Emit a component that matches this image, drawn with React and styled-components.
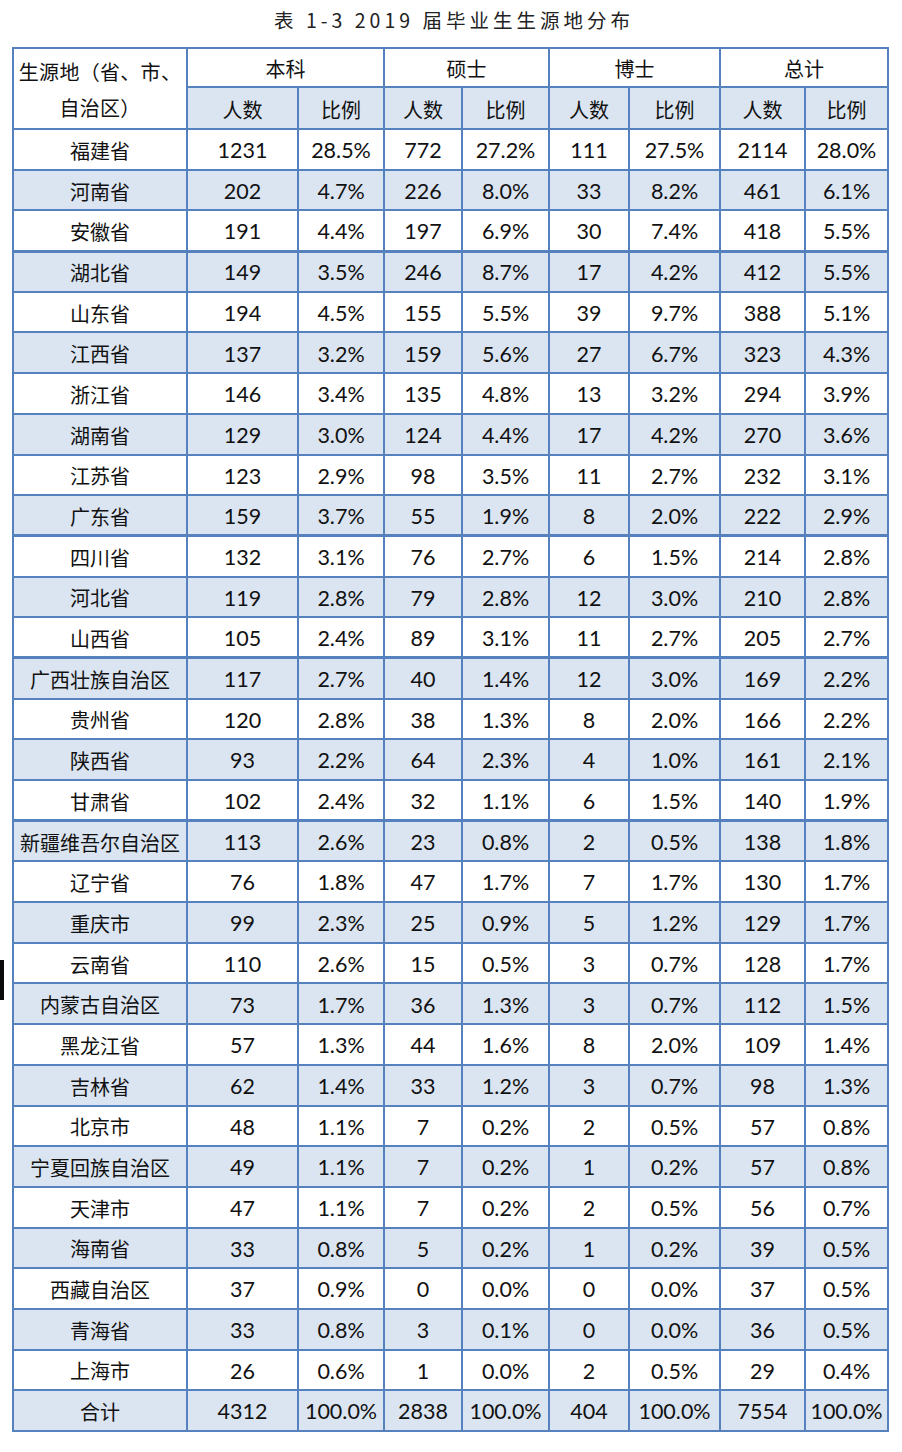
import React from "react";
import styled, { createGlobalStyle } from "styled-components";

const Global = createGlobalStyle`
  html, body { margin: 0; padding: 0; background: #fff; }
  body { font-family: "Lato", "Noto Sans CJK SC", sans-serif; color: #111; }
`;

const Page = styled.div`
  position: relative;
  width: 902px;
  height: 1452px;
  padding: 0 0 0 12px;
  box-sizing: border-box;
`;

const Title = styled.div`
  height: 47px;
  display: flex;
  justify-content: center;
  align-items: flex-start;
  padding: 5px 0 0 6px;
  box-sizing: border-box;
  font-family: "Noto Sans CJK SC", sans-serif;
  font-size: 19.5px;
  letter-spacing: 4px;
  color: #222;
  margin-left: -12px;
`;

const Table = styled.table`
  border-collapse: collapse;
  table-layout: fixed;
  width: 877px;
  color: #111;
`;

const Cell = styled.td`
  border: 2px solid #5581bf;
  text-align: center;
  vertical-align: middle;
  padding: 3px 0 0 0;
  white-space: nowrap;
  line-height: 1;
  background: ${(p) => (p.$shade ? "#dbe5f1" : "#fff")};
  font-family: ${(p) => (p.$cjk ? '"Noto Sans CJK SC", sans-serif' : '"Lato", "Noto Sans CJK SC", sans-serif')};
  font-size: ${(p) => (p.$cjk ? "20px" : "21.5px")};
  ${(p) => (p.$thick ? "border-top-width: 3px;" : "")}
`;

const CornerCell = styled(Cell)`
  white-space: normal;
  line-height: 36px;
  padding: 2px 0 0 0;
  letter-spacing: 0.3px;
`;

const HeadRow = styled.tr`
  height: ${(p) => p.$h}px;
`;

const Row = styled.tr`
  height: 40.7px;
`;

const Marker = styled.div`
  position: absolute;
  left: 0;
  top: 960px;
  width: 4px;
  height: 40px;
  background: #0a0a0a;
`;

const data = [
  ["福建省", 1231, "28.5%", 772, "27.2%", 111, "27.5%", 2114, "28.0%"],
  ["河南省", 202, "4.7%", 226, "8.0%", 33, "8.2%", 461, "6.1%"],
  ["安徽省", 191, "4.4%", 197, "6.9%", 30, "7.4%", 418, "5.5%"],
  ["湖北省", 149, "3.5%", 246, "8.7%", 17, "4.2%", 412, "5.5%"],
  ["山东省", 194, "4.5%", 155, "5.5%", 39, "9.7%", 388, "5.1%"],
  ["江西省", 137, "3.2%", 159, "5.6%", 27, "6.7%", 323, "4.3%"],
  ["浙江省", 146, "3.4%", 135, "4.8%", 13, "3.2%", 294, "3.9%"],
  ["湖南省", 129, "3.0%", 124, "4.4%", 17, "4.2%", 270, "3.6%"],
  ["江苏省", 123, "2.9%", 98, "3.5%", 11, "2.7%", 232, "3.1%"],
  ["广东省", 159, "3.7%", 55, "1.9%", 8, "2.0%", 222, "2.9%"],
  ["四川省", 132, "3.1%", 76, "2.7%", 6, "1.5%", 214, "2.8%"],
  ["河北省", 119, "2.8%", 79, "2.8%", 12, "3.0%", 210, "2.8%"],
  ["山西省", 105, "2.4%", 89, "3.1%", 11, "2.7%", 205, "2.7%"],
  ["广西壮族自治区", 117, "2.7%", 40, "1.4%", 12, "3.0%", 169, "2.2%"],
  ["贵州省", 120, "2.8%", 38, "1.3%", 8, "2.0%", 166, "2.2%"],
  ["陕西省", 93, "2.2%", 64, "2.3%", 4, "1.0%", 161, "2.1%"],
  ["甘肃省", 102, "2.4%", 32, "1.1%", 6, "1.5%", 140, "1.9%"],
  ["新疆维吾尔自治区", 113, "2.6%", 23, "0.8%", 2, "0.5%", 138, "1.8%"],
  ["辽宁省", 76, "1.8%", 47, "1.7%", 7, "1.7%", 130, "1.7%"],
  ["重庆市", 99, "2.3%", 25, "0.9%", 5, "1.2%", 129, "1.7%"],
  ["云南省", 110, "2.6%", 15, "0.5%", 3, "0.7%", 128, "1.7%"],
  ["内蒙古自治区", 73, "1.7%", 36, "1.3%", 3, "0.7%", 112, "1.5%"],
  ["黑龙江省", 57, "1.3%", 44, "1.6%", 8, "2.0%", 109, "1.4%"],
  ["吉林省", 62, "1.4%", 33, "1.2%", 3, "0.7%", 98, "1.3%"],
  ["北京市", 48, "1.1%", 7, "0.2%", 2, "0.5%", 57, "0.8%"],
  ["宁夏回族自治区", 49, "1.1%", 7, "0.2%", 1, "0.2%", 57, "0.8%"],
  ["天津市", 47, "1.1%", 7, "0.2%", 2, "0.5%", 56, "0.7%"],
  ["海南省", 33, "0.8%", 5, "0.2%", 1, "0.2%", 39, "0.5%"],
  ["西藏自治区", 37, "0.9%", 0, "0.0%", 0, "0.0%", 37, "0.5%"],
  ["青海省", 33, "0.8%", 3, "0.1%", 0, "0.0%", 36, "0.5%"],
  ["上海市", 26, "0.6%", 1, "0.0%", 2, "0.5%", 29, "0.4%"],
  ["合计", 4312, "100.0%", 2838, "100.0%", 404, "100.0%", 7554, "100.0%"],
];

const widths = [174, 111, 86, 78, 87, 80, 91, 85, 83];
const groups = ["本科", "硕士", "博士", "总计"];
const thickRows = new Set([3, 10, 13, 17]);

export default function App() {
  return (
    <Page>
      <Global />
      <Title>表 1-3 2019 届毕业生生源地分布</Title>
      <Table>
        <colgroup>
          {widths.map((w, i) => (
            <col key={i} style={{ width: w }} />
          ))}
        </colgroup>
        <thead>
          <HeadRow $h={39}>
            <CornerCell rowSpan={2} $cjk>
              生源地（省、市、自治区）
            </CornerCell>
            {groups.map((g) => (
              <Cell key={g} colSpan={2} $cjk>
                {g}
              </Cell>
            ))}
          </HeadRow>
          <HeadRow $h={42}>
            {groups.map((g) => (
              <React.Fragment key={g}>
                <Cell $cjk $shade>人数</Cell>
                <Cell $cjk $shade>比例</Cell>
              </React.Fragment>
            ))}
          </HeadRow>
        </thead>
        <tbody>
          {data.map((r, i) => (
            <Row key={r[0]}>
              {r.map((v, j) => (
                <Cell
                  key={j}
                  $cjk={j === 0}
                  $shade={i % 2 === 1}
                  $thick={thickRows.has(i)}
                >
                  {v}
                </Cell>
              ))}
            </Row>
          ))}
        </tbody>
      </Table>
      <Marker />
    </Page>
  );
}
